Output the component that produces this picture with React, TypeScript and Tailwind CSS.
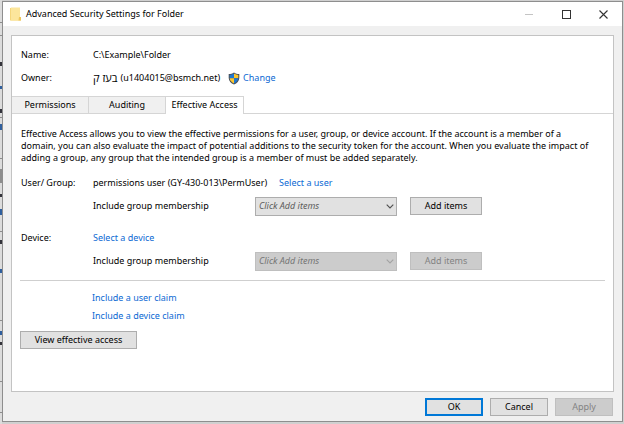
import type { ReactNode } from "react";

function FolderIcon() {
  return (
    <svg width="11" height="14" viewBox="0 0 11 14" aria-hidden="true">
      <path d="M0 1h9v9h2v3.500H0z" fill="#f5d77c" />
      <path d="M1 0.500h9v9.500h-1v3.500H1z" fill="#fce69c" />
      <path d="M9 10h2v3.500H8.500z" fill="#eec65c" />
    </svg>
  );
}

function ShieldIcon() {
  return (
    <svg width="12" height="13" viewBox="0 0 12 13" aria-hidden="true">
      <path d="M6 0.500C4.500 1.600 2.500 2 0.700 2v4c0 3 2.300 5.300 5.300 6.500C9 11.300 11.300 9 11.300 6V2C9.500 2 7.500 1.600 6 0.500z" fill="#4b5158" />
      <path d="M6 1.600C4.700 2.500 3.200 2.900 1.700 2.900v3.300H6z" fill="#1f78d1" />
      <path d="M6 1.600c1.300 0.900 2.800 1.300 4.300 1.300v3.300H6z" fill="#fdc72e" />
      <path d="M1.700 6.200H6v5.200C3.700 10.400 1.900 8.500 1.700 6.200z" fill="#fdc72e" />
      <path d="M10.300 6.200H6v5.200c2.300-1 4.100-2.900 4.300-5.200z" fill="#1f78d1" />
    </svg>
  );
}

function DesktopBehind() {
  return (
    <svg className="absolute left-0 top-0" width="2" height="424" aria-hidden="true">
      <rect width="2" height="424" fill="#dcdcdc" />
      <g fill="#8d8d8d">
        <rect y="22" width="2" height="1" />
        <rect y="35" width="2" height="1" />
        <rect y="117" width="2" height="1" />
        <rect y="158" width="2" height="1" />
        <rect y="169" width="2" height="14" />
        <rect y="231" width="2" height="1" />
        <rect y="320" width="2" height="1" />
        <rect y="381" width="2" height="1" />
        <rect y="412" width="2" height="1" />
      </g>
      <g fill="#33333b">
        <rect y="62" width="2" height="4" />
        <rect y="109" width="2" height="4" />
        <rect y="194" width="2" height="3" />
        <rect y="240" width="2" height="4" />
        <rect y="342" width="2" height="3" />
      </g>
      <g fill="#2f5f9e">
        <rect y="86" width="2" height="3" />
        <rect y="124" width="2" height="6" />
        <rect y="209" width="2" height="6" />
        <rect y="269" width="2" height="4" />
        <rect y="331" width="2" height="4" />
      </g>
    </svg>
  );
}

function LinkText({ children }: { children: ReactNode }) {
  return (
    <a href="#" className="whitespace-nowrap text-[#0b69d3]">
      {children}
    </a>
  );
}

function PushButton({
  children,
  width,
  disabled = false,
  primary = false,
}: {
  children: ReactNode;
  width: string;
  disabled?: boolean;
  primary?: boolean;
}) {
  const tone = disabled
    ? "border border-[#bfbfbf] bg-[#cccccc] text-[#838383]"
    : primary
      ? "border-2 border-[#0078d7] bg-[#e1e1e1]"
      : "border border-[#adadad] bg-[#e1e1e1]";
  return (
    <button
      type="button"
      disabled={disabled}
      className={`flex h-[18px] shrink-0 items-center justify-center whitespace-nowrap ${width} ${tone}`}
    >
      {children}
    </button>
  );
}

function MembershipRow({ id, disabled = false }: { id: string; disabled?: boolean }) {
  return (
    <div className="flex h-5 items-center pl-[73px]">
      <label htmlFor={id} className="w-[162px] shrink-0">
        Include group membership
      </label>
      <div className="relative flex w-[142px] shrink-0">
        <select
          id={id}
          disabled={disabled}
          className={`h-[19px] w-full appearance-none border pl-[3px] italic opacity-100 ${
            disabled
              ? "border-[#bfbfbf] bg-[#cccccc] text-[#757575]"
              : "border-[#adadad] bg-[#e1e1e1] text-[#5c5c5c]"
          }`}
        >
          <option>Click Add items</option>
        </select>
        <svg
          className={`pointer-events-none absolute right-[3px] top-[7px] ${disabled ? "text-[#a3a3a3]" : "text-[#505050]"}`}
          width="8"
          height="5"
          viewBox="0 0 8 5"
          aria-hidden="true"
        >
          <path d="M0.700 0.700L4 4l3.300-3.300" fill="none" stroke="currentColor" strokeWidth="1.100" />
        </svg>
      </div>
      <div className="pl-[13px]">
        <PushButton width="w-[72px]" disabled={disabled}>
          Add items
        </PushButton>
      </div>
    </div>
  );
}

function Tab({ children, active = false }: { children: ReactNode; active?: boolean }) {
  return (
    <button
      type="button"
      role="tab"
      aria-selected={active}
      className={`flex h-[18px] items-center justify-center whitespace-nowrap border-r border-t border-[#d5d5d5] ${
        active ? "w-[78px] bg-white pb-px" : "w-[77px] border-b bg-[#f0f0f0]"
      }`}
    >
      {children}
    </button>
  );
}

export default function App() {
  return (
    <div className="relative min-h-screen bg-[#d0d0d0] pb-[2px] pl-[2px] pr-[1px] pt-[1px] font-['Noto_Sans','Open_Sans','DejaVu_Sans',sans-serif] text-[9px] leading-[12px] text-black">
      <DesktopBehind />
      <main className="relative flex min-h-[calc(100vh-3px)] flex-col border border-[#8e8e8e] bg-[#f0f0f0]">
        <header className="flex h-6 items-center bg-white pl-[7px]">
          <FolderIcon />
          <h1 className="flex-1 pl-[5px]">Advanced Security Settings for Folder</h1>
          <button type="button" aria-label="Minimize" disabled className="flex w-[37px] justify-center">
            <svg width="9" height="9" aria-hidden="true">
              <path d="M0 4.500h8" stroke="#c4c4c4" />
            </svg>
          </button>
          <button type="button" aria-label="Maximize" className="flex w-[37px] justify-center">
            <svg width="9" height="9" aria-hidden="true">
              <rect x="0.500" y="0.500" width="8" height="8" fill="none" stroke="#333333" />
            </svg>
          </button>
          <button type="button" aria-label="Close" className="flex w-[37px] justify-center">
            <svg width="9" height="9" aria-hidden="true">
              <path d="M0.500 0.500l8 8M8.500 0.500l-8 8" stroke="#333333" strokeWidth="1.100" />
            </svg>
          </button>
        </header>

        <section className="mx-2 mt-[9px] flex flex-1 flex-col border border-[#c3c3c3] bg-white">
          <dl className="grid grid-cols-[72px_1fr] gap-y-[7px] pb-[10px] pl-[9px] pt-[11px] leading-4">
            <dt>Name:</dt>
            <dd>C:\Example\Folder</dd>
            <dt>Owner:</dt>
            <dd className="flex items-center">
              <span className="flex items-center gap-[3px]">
                <bdi className="text-[11px]">בעז ק</bdi>
                <bdi>(u1404015@bsmch.net)</bdi>
              </span>
              <span className="flex items-center gap-[3px] pl-2">
                <ShieldIcon />
                <LinkText>Change</LinkText>
              </span>
            </dd>
          </dl>

          <div className="flex" role="tablist">
            <Tab>Permissions</Tab>
            <Tab>Auditing</Tab>
            <Tab active>Effective Access</Tab>
            <div className="flex-1 border-b border-[#d5d5d5]" />
          </div>

          <div className="pl-[9px] pr-2 pt-[14px]" role="tabpanel">
            <p className="pb-[9px]">
              Effective Access allows you to view the effective permissions for a user, group, or device account. If the account is a member of a
              <br />
              domain, you can also evaluate the impact of potential additions to the security token for the account. When you evaluate the impact of
              <br />
              adding a group, any group that the intended group is a member of must be added separately.
            </p>
            <div className="flex h-5 items-center">
              <span className="w-[72px] shrink-0">User/ Group:</span>
              <span className="pr-3">permissions user (GY-430-013\PermUser)</span>
              <LinkText>Select a user</LinkText>
            </div>
            <div className="-ml-px pt-[3px]">
              <MembershipRow id="user-groups" />
            </div>
            <div className="mt-3 flex h-5 items-center">
              <span className="w-[72px] shrink-0">Device:</span>
              <LinkText>Select a device</LinkText>
            </div>
            <div className="-ml-px pt-[3px]">
              <MembershipRow id="device-groups" disabled />
            </div>
            <hr className="-ml-px mt-[9px] border-[#cfcfcf]" />
            <div className="flex flex-col items-start gap-[6px] pl-[71px] pt-[11px]">
              <LinkText>Include a user claim</LinkText>
              <LinkText>Include a device claim</LinkText>
            </div>
            <div className="-ml-px pt-[9px]">
              <PushButton width="w-[117px]">View effective access</PushButton>
            </div>
          </div>
        </section>

        <footer className="flex justify-end gap-[7px] pb-[5px] pl-2 pr-[9px] pt-[6px]">
          <PushButton width="w-[58px]" primary>
            OK
          </PushButton>
          <PushButton width="w-[58px]">Cancel</PushButton>
          <PushButton width="w-[58px]" disabled>
            Apply
          </PushButton>
        </footer>
      </main>
    </div>
  );
}
